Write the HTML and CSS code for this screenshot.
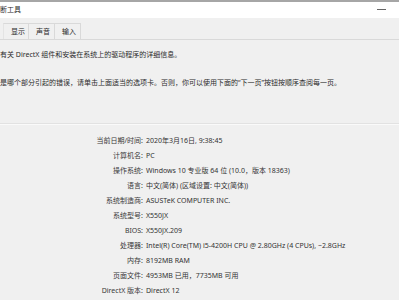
FILE: index.html
```html
<!DOCTYPE html>
<html>
<head>
    <meta name="viewport" content="width=device-width, initial-scale=1">
    <link rel="stylesheet" href="styles.css">
</head>
<body>

<div class="window">
    <div class="titlebar">
        <span class="title">断工具</span>
        <span class="min-btn"></span>
    </div>

    <div class="tabs">
        <span class="tab">显示</span>
        <span class="tab">声音</span>
        <span class="tab">输入</span>
    </div>

    <div class="intro">
        <p class="line">有关 DirectX 组件和安装在系统上的驱动程序的详细信息。</p>
        <p class="line second">是哪个部分引起的错误，请单击上面适当的选项卡。否则，你可以使用下面的“下一页”按钮按顺序查阅每一页。</p>
    </div>

    <div class="info">
        <div class="row"><span class="label">当前日期/时间:</span><span class="value">2020年3月16日, 9:38:45</span></div>
        <div class="row"><span class="label">计算机名:</span><span class="value">PC</span></div>
        <div class="row"><span class="label">操作系统:</span><span class="value">Windows 10 专业版 64 位 (10.0，版本 18363)</span></div>
        <div class="row"><span class="label">语言:</span><span class="value">中文(简体) (区域设置: 中文(简体))</span></div>
        <div class="row"><span class="label">系统制造商:</span><span class="value">ASUSTeK COMPUTER INC.</span></div>
        <div class="row"><span class="label">系统型号:</span><span class="value">X550JX</span></div>
        <div class="row"><span class="label">BIOS:</span><span class="value">X550JX.209</span></div>
        <div class="row"><span class="label">处理器:</span><span class="value">Intel(R) Core(TM) i5-4200H CPU @ 2.80GHz (4 CPUs), ~2.8GHz</span></div>
        <div class="row"><span class="label">内存:</span><span class="value">8192MB RAM</span></div>
        <div class="row"><span class="label">页面文件:</span><span class="value">4953MB 已用，7735MB 可用</span></div>
        <div class="row"><span class="label">DirectX 版本:</span><span class="value">DirectX 12</span></div>
    </div>
</div>

</body>
</html>
```

FILE: styles.css
```css
* {box-sizing: border-box;}

body {
    margin: 0;
    background: #f0f0f0;
    font-family: "Noto Sans", "Noto Sans CJK SC", sans-serif;
    font-size: 7px;
    color: #2b2b2b;
}

.window {
    border-top: 2px solid #a6a6a6;
    width: 399px;
    height: 300px;
    overflow: hidden;
}

/* White title bar, title is cut off on the left */
.titlebar {
    height: 16px;
    background: #fff;
    display: flex;
    align-items: center;
    justify-content: space-between;
    padding: 0 13px 0 0;
}

.title {
    line-height: 14px;
    margin-top: -1px;
}

.min-btn {
    width: 9px;
    height: 1px;
    background: #666;
    margin-top: -2px;
}

/* Tab strip */
.tabs {
    display: flex;
    margin-top: 5px;
    padding-left: 3px;
    height: 17px;
    border-bottom: 1px solid #d9d9d9;
}

.tab {
    width: 26px;
    padding-left: 7px;
    line-height: 16px;
    border: 1px solid #d9d9d9;
    border-bottom: none;
    border-left-color: #e4e4e4;
    background: #f0f0f0;
}

.tab + .tab {
    border-left: none;
}

/* Description text */
.intro {
    padding-top: 8px;
    height: 84px;
    border-bottom: 1px solid #e2e2e2;
}

.line {
    margin: 0;
    line-height: 14px;
    white-space: nowrap;
}

.line.second {
    margin-top: 14px;
}

/* System information table */
.info {
    border-top: 1px solid #fafafa;
    padding-top: 8px;
}

.row {
    display: flex;
    line-height: 15px;
    white-space: nowrap;
}

.label {
    width: 146px;
    text-align: right;
    padding-right: 3px;
    color: #3a3a3a;
}

.value {
    color: #333;
}
```
